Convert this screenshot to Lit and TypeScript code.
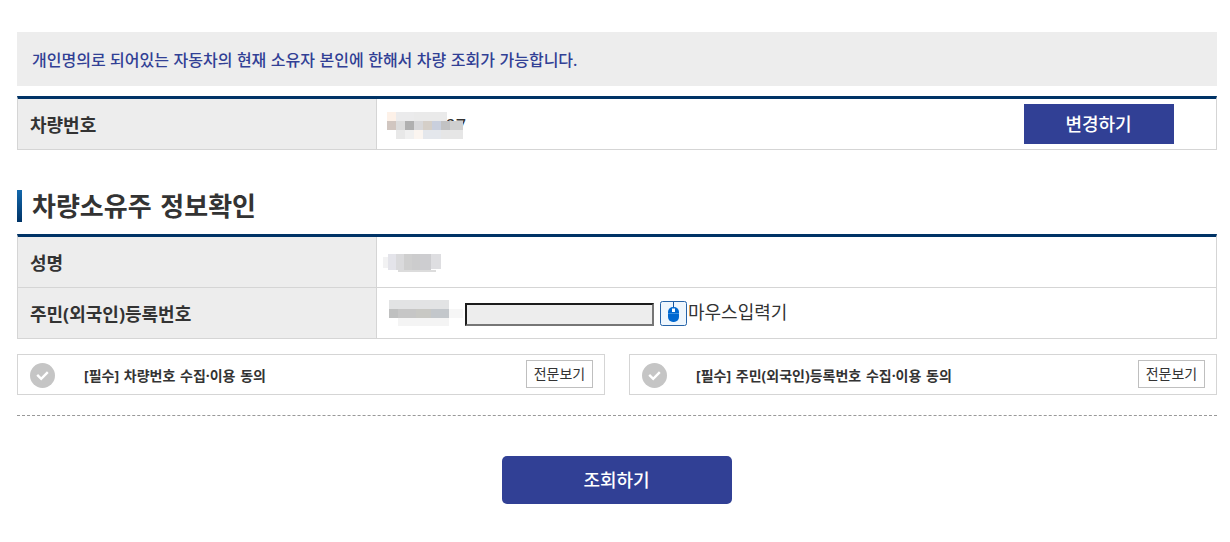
import { LitElement, html, svg, css } from 'lit';
import { customElement } from 'lit/decorators.js';

type Block = [x: number, y: number, w: number, h: number, fill: string];

const CAR_MASK: Block[] = [
  [0, 0, 9, 9, '#fdf1e8'], [9, 0, 18, 9, '#ebebec'], [27, 0, 33, 9, '#eaeaea'],
  [0, 9, 9, 9, '#d1c6c0'], [9, 9, 9, 9, '#dcdcdc'], [18, 9, 9, 9, '#b0b0b0'],
  [27, 9, 9, 9, '#d8d8da'], [36, 9, 9, 9, '#d5cfc8'], [45, 9, 9, 9, '#c9cfdd'],
  [54, 9, 9, 9, '#c2c2c3'], [63, 9, 13, 9, '#cfcfcf'],
  [9, 18, 9, 9, '#e8e8e8'], [18, 18, 9, 9, '#f0f0f0'], [27, 18, 9, 9, '#fbf5f0'],
  [36, 18, 18, 9, '#e4e7ec'], [54, 18, 22, 9, '#e6e6e6'],
];

const NAME_MASK: Block[] = [
  [0, 4, 5, 11, '#f2f2f3'], [5, 1, 8, 16, '#e4e4ea'], [13, 1, 8, 16, '#dadadc'],
  [21, 1, 8, 16, '#cfcfcf'], [29, 1, 8, 16, '#cccccd'], [37, 1, 11, 16, '#cdcdd0'],
  [48, 1, 10, 15, '#dedee1'], [15, 17, 38, 2, '#dcdcdc'],
];

const ID_MASK: Block[] = [
  [0, 0, 60, 9, '#e2e3e4'], [0, 9, 9, 9, '#bfc0c0'], [9, 9, 18, 9, '#c6c6c6'],
  [27, 9, 15, 9, '#c8c8c4'], [42, 9, 18, 9, '#c3c7cb'], [60, 9, 14, 9, '#f6f6f6'],
  [9, 18, 51, 8, '#f4f4f4'],
];

const mask = (cls: string, width: number, height: number, blocks: Block[]) => html`
  <svg class=${cls} width=${width} height=${height} shape-rendering="crispEdges">
    ${blocks.map(([x, y, w, h, fill]) => svg`<rect x=${x} y=${y} width=${w} height=${h} fill=${fill} />`)}
  </svg>
`;

@customElement('consent-item')
export class ConsentItem extends LitElement {
  static properties = {
    label: { type: String },
  };

  declare label: string;

  static styles = css`
    :host {
      display: flex;
      align-items: center;
      box-sizing: border-box;
      height: 41px;
      padding: 0 11px 0 12px;
      border: 1px solid #d5d5d5;
      font-size: 14px;
    }

    .check {
      flex: none;
      display: block;
      margin-top: 1px;
    }

    .label {
      flex: 1;
      margin-left: 29px;
      font-weight: 700;
      font-size: 14px;
      word-spacing: 1.1px;
      color: #333;
    }

    .view {
      box-sizing: border-box;
      width: 67px;
      height: 28px;
      margin-bottom: 1px;
      padding: 0;
      border: 1px solid #bfbfbf;
      background: #fff;
      font: inherit;
      line-height: 26px;
      color: #333;
    }
  `;

  render() {
    return html`
      <svg class="check" width="25" height="25" viewBox="0 0 25 25">
        <circle cx="12.5" cy="12.5" r="12.5" fill="#c5c5c5" />
        <path d="M7.2 11.8l4 4 6.6-6.6" fill="none" stroke="#fff" stroke-width="2.4" />
      </svg>
      <span class="label">${this.label}</span>
      <button class="view">전문보기</button>
    `;
  }
}

@customElement('app-root')
export class AppRoot extends LitElement {
  static styles = css`
    :host {
      display: block;
      box-sizing: border-box;
      height: 542px;
      padding: 32px 13px 0 17px;
      background: #fff;
      color: #333;
      font-family: 'Noto Sans', 'Noto Sans CJK KR', sans-serif;
      font-size: 18px;
    }

    .notice {
      height: 54px;
      padding-left: 15px;
      background: #ededed;
      color: #314095;
      font-size: 16px;
      font-weight: 500;
      line-height: 56px;
      word-spacing: 0.35px;
    }

    .table {
      border: 1px solid #d5d5d5;
      border-top: 3px solid #003366;
    }

    .car {
      margin-top: 10px;
    }

    .row {
      display: grid;
      grid-template-columns: 359px 1fr;
      grid-template-rows: 50px;
    }

    .row + .row {
      border-top: 1px solid #d5d5d5;
    }

    .head {
      box-sizing: border-box;
      height: 50px;
      padding: 1px 0 0 12px;
      border-right: 1px solid #d5d5d5;
      background: #ededed;
      font-weight: 700;
      line-height: 50px;
    }

    .cell {
      display: flex;
      align-items: center;
    }

    .number {
      position: relative;
      width: 79px;
      height: 27px;
      margin: 2px 0 0 10px;
      line-height: 26px;
      text-align: right;
    }

    .number svg {
      position: absolute;
      left: 0;
      top: 0;
    }

    .change {
      width: 150px;
      height: 40px;
      margin: 0 42px 1px auto;
      padding: 0 1px 0 0;
      border: 0;
      background: #314095;
      color: #fff;
      font: inherit;
      font-weight: 500;
      line-height: 41px;
    }

    h2 {
      display: flex;
      align-items: center;
      height: 32px;
      margin: 40px 0 12px;
      font-size: 26px;
      font-weight: 700;
      line-height: 32px;
      word-spacing: 2px;
    }

    h2::before {
      content: '';
      width: 5px;
      height: 32px;
      margin-right: 10px;
      background: linear-gradient(#1268ac, #003366);
    }

    .name-mask {
      margin: 2px 0 0 6px;
    }

    .id-mask {
      margin-left: 12px;
    }

    .field {
      box-sizing: border-box;
      width: 189px;
      height: 23px;
      margin: 2px 6px 0 2px;
      padding: 0;
      border: 2px solid;
      border-color: #1c1c1c #767676 #767676 #1c1c1c;
      background: #ededed;
    }

    .mouse {
      margin-right: 1px;
    }

    .mouse-label {
      margin-bottom: 4px;
    }

    .consents {
      display: grid;
      grid-template-columns: 1fr 1fr;
      gap: 24px;
      margin-top: 15px;
      padding-bottom: 20px;
      border-bottom: 1px dashed #999;
    }

    .submit {
      display: block;
      width: 230px;
      height: 48px;
      margin: 40px auto 0;
      padding: 0 1px 0 0;
      border: 0;
      border-radius: 5px;
      background: #314095;
      color: #fff;
      font: inherit;
      font-weight: 500;
      line-height: 48px;
    }
  `;

  render() {
    return html`
      <div class="notice">개인명의로 되어있는 자동차의 현재 소유자 본인에 한해서 차량 조회가 가능합니다.</div>

      <div class="table car">
        <div class="row">
          <div class="head">차량번호</div>
          <div class="cell">
            <div class="number">97 ${mask('mask', 76, 27, CAR_MASK)}</div>
            <button class="change">변경하기</button>
          </div>
        </div>
      </div>

      <h2>차량소유주 정보확인</h2>

      <div class="table">
        <div class="row">
          <div class="head">성명</div>
          <div class="cell">${mask('name-mask', 58, 20, NAME_MASK)}</div>
        </div>
        <div class="row">
          <div class="head">주민(외국인)등록번호</div>
          <div class="cell">
            ${mask('id-mask', 74, 26, ID_MASK)}
            <input class="field" type="password" />
            <svg class="mouse" width="27" height="27" viewBox="0 0 27 27">
              <rect x="0.5" y="1.5" width="26" height="24" rx="2" fill="#eef6fd" stroke="#2563a8" />
              <path d="M13.5 2v6" stroke="#17569f" />
              <rect x="8" y="7" width="11" height="15" rx="5" fill="#0068d0" />
              <rect x="12" y="8.5" width="3" height="3.5" fill="#fff" />
              <path d="M8 13.5h11" stroke="#3c90e0" />
            </svg>
            <span class="mouse-label">마우스입력기</span>
          </div>
        </div>
      </div>

      <div class="consents">
        <consent-item label="[필수] 차량번호 수집·이용 동의"></consent-item>
        <consent-item label="[필수] 주민(외국인)등록번호 수집·이용 동의"></consent-item>
      </div>

      <button class="submit">조회하기</button>
    `;
  }
}
